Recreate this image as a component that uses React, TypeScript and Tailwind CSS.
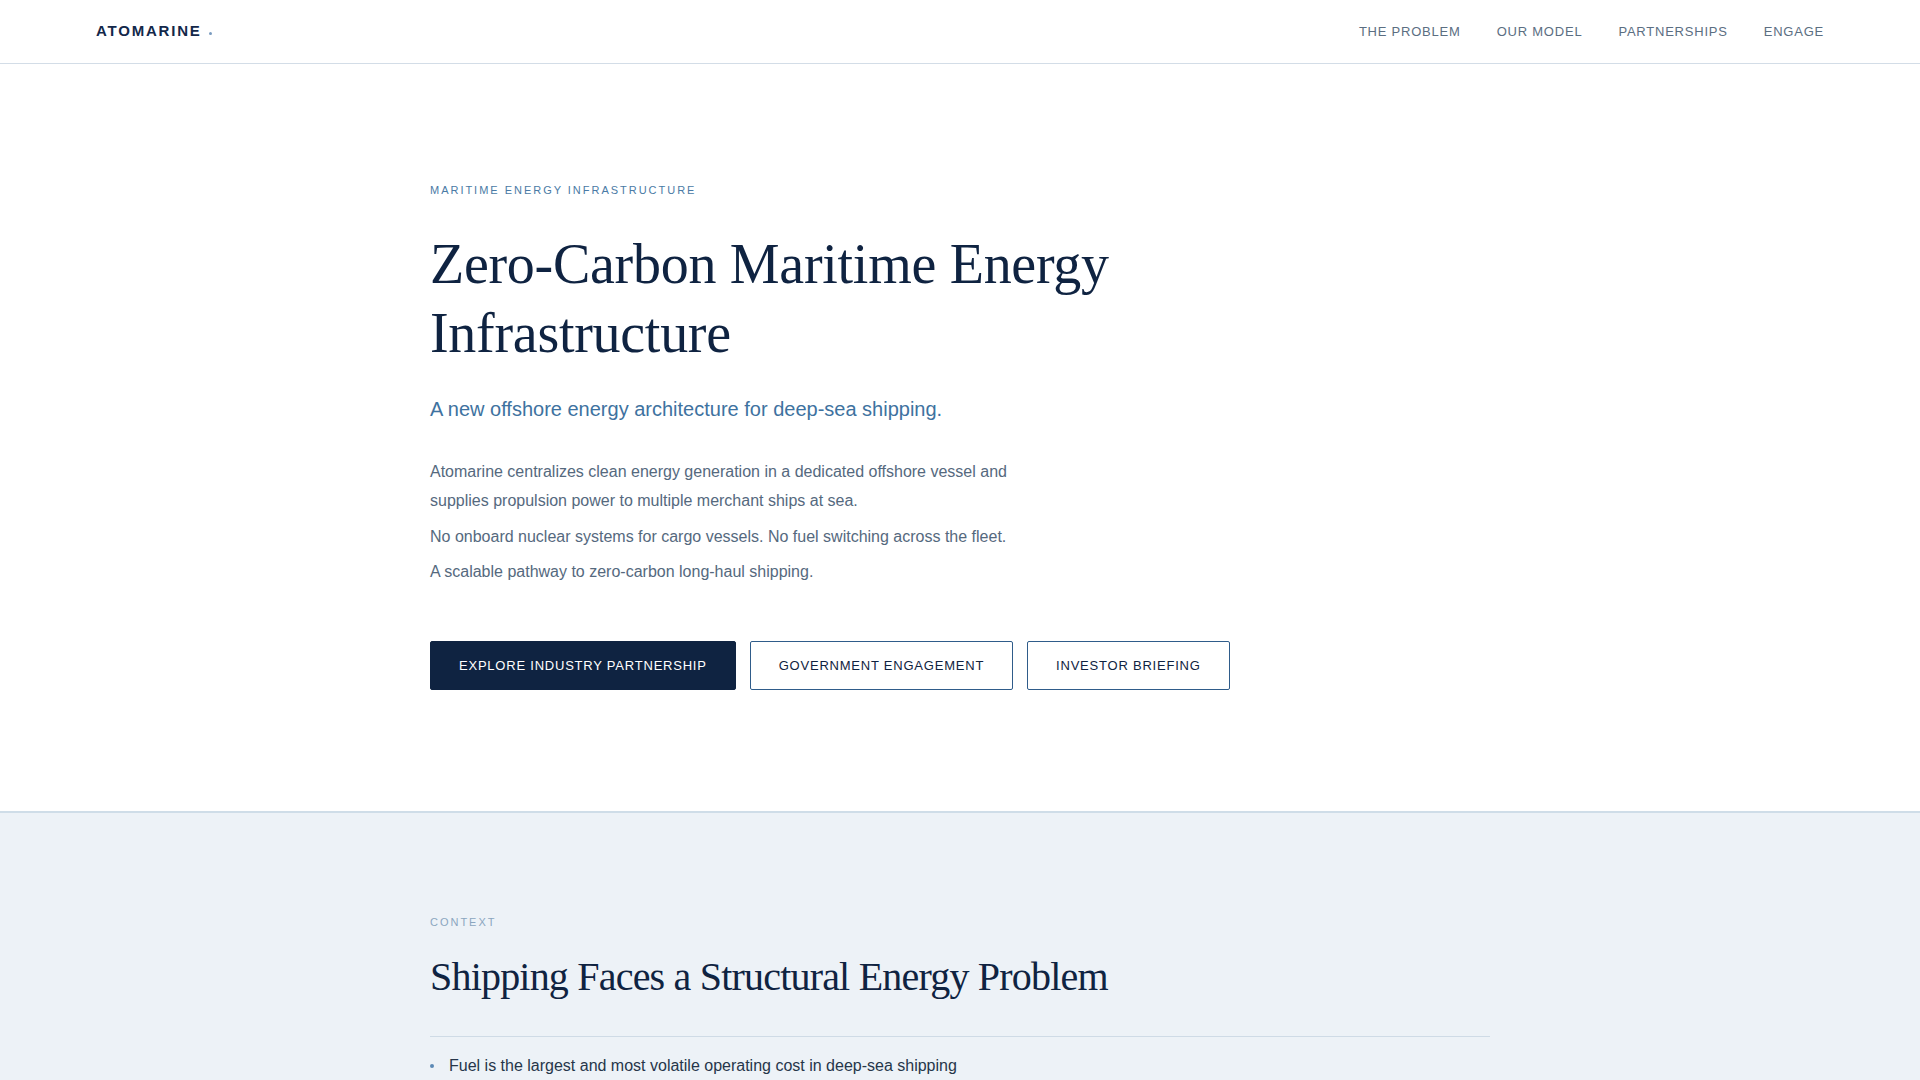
const sans = "font-['Liberation_Sans',Arial,sans-serif]";
const serif = "font-['Liberation_Serif','Times_New_Roman',serif]";

const navLinks = ["The Problem", "Our Model", "Partnerships", "Engage"];

const problems = [
  "Fuel is the largest and most volatile operating cost in deep-sea shipping",
  "Alternative fuels require new engines, bunkering networks and crew training",
  "Onboard generation adds weight, complexity and regulatory burden to every ship",
];

function Header() {
  return (
    <header className="flex h-[64px] items-center justify-between border-b border-[#d3dde7] bg-white px-24">
      <a href="#" className="flex items-center">
        <span className="text-[15px] font-bold tracking-[0.12em] text-[#13284a]">
          ATOMARINE
        </span>
        <span className="ml-[7px] mt-[3px] h-[3px] w-[3px] rounded-full bg-[#7a9cc0]" />
      </a>
      <nav className="flex items-center gap-9">
        {navLinks.map((link) => (
          <a
            key={link}
            href="#"
            className="text-[13px] uppercase tracking-[0.06em] text-[#5b6e82]"
          >
            {link}
          </a>
        ))}
      </nav>
    </header>
  );
}

function Hero() {
  return (
    <section className="border-b-2 border-[#cfdde8] bg-white pb-[121px] pt-[118px]">
      <div className="mx-auto max-w-[1060px]">
        <p className="text-[11px] uppercase leading-[16px] tracking-[0.18em] text-[#4a7aa5]">
          Maritime Energy Infrastructure
        </p>
        <h1
          className={`${serif} mt-8 max-w-[760px] text-[56px] leading-[69px] tracking-[-0.005em] text-[#0f2341]`}
        >
          Zero-Carbon Maritime Energy Infrastructure
        </h1>
        <p className="mt-[26px] text-[20px] leading-[30px] text-[#3e72a0]">
          A new offshore energy architecture for deep-sea shipping.
        </p>
        <div className="mt-[34px] max-w-[600px] space-y-[7px] text-[16px] leading-[28.8px] text-[#55697e]">
          <p>
            Atomarine centralizes clean energy generation in a dedicated
            offshore vessel and supplies propulsion power to multiple merchant
            ships at sea.
          </p>
          <p>
            No onboard nuclear systems for cargo vessels. No fuel switching
            across the fleet.
          </p>
          <p>A scalable pathway to zero-carbon long-haul shipping.</p>
        </div>
        <div className="mt-[54px] flex gap-[14px]">
          <a
            href="#"
            className="rounded-[2px] border border-[#0f2341] bg-[#0f2341] px-7 py-[14px] text-[13px] uppercase leading-[19px] tracking-[0.06em] text-white"
          >
            Explore Industry Partnership
          </a>
          <a
            href="#"
            className="rounded-[2px] border border-[#2f5c8a] bg-white px-7 py-[14px] text-[13px] uppercase leading-[19px] tracking-[0.06em] text-[#0f2341]"
          >
            Government Engagement
          </a>
          <a
            href="#"
            className="rounded-[2px] border border-[#2f5c8a] bg-white px-7 py-[14px] text-[13px] uppercase leading-[19px] tracking-[0.06em] text-[#0f2341]"
          >
            Investor Briefing
          </a>
        </div>
      </div>
    </section>
  );
}

function Context() {
  return (
    <section className="bg-[#edf2f7] pb-[120px] pt-[101px]">
      <div className="mx-auto max-w-[1060px]">
        <p className="text-[11px] uppercase leading-[16px] tracking-[0.18em] text-[#8ba6bf]">
          Context
        </p>
        <h2
          className={`${serif} mt-[22px] text-[40px] leading-[50px] tracking-[-0.02em] text-[#0f2341]`}
        >
          Shipping Faces a Structural Energy Problem
        </h2>
        <ul className="mt-[34px] space-y-4 border-t border-[#cfdbe6] pt-[17px]">
          {problems.map((item) => (
            <li
              key={item}
              className="flex items-center gap-[15px] text-[16px] leading-[24px] text-[#26364a]"
            >
              <span className="h-[4px] w-[4px] shrink-0 rounded-full bg-[#5b89b5]" />
              {item}
            </li>
          ))}
        </ul>
      </div>
    </section>
  );
}

export default function App() {
  return (
    <div className={`${sans} min-h-screen bg-white`}>
      <Header />
      <Hero />
      <Context />
    </div>
  );
}
